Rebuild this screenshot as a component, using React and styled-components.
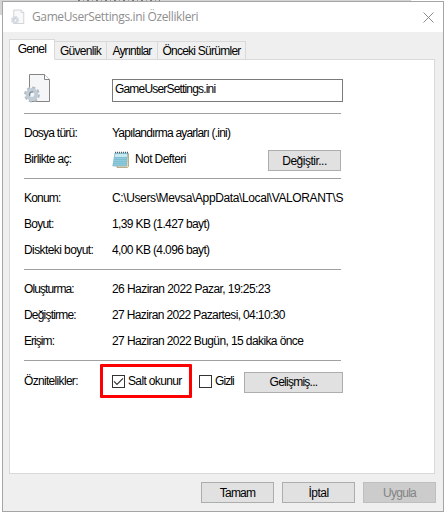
import React from 'react'
import styled, { createGlobalStyle } from 'styled-components'

const GlobalStyle = createGlobalStyle`
    * {
        box-sizing: border-box;
    }
    body {
        margin: 0;
        background: #fff;
        overflow: hidden;
        font-family: "Liberation Sans", Arial, sans-serif;
        font-size: 12px;
        color: #000;
    }
`;

const Desktop = styled.div`
    width: 447px;
    height: 514px;
    padding: 1px 0 0 2px;
    background:
        repeating-linear-gradient(90deg, #777 0 2px, #d4d4d4 2px 5px, #999 5px 6px, #d4d4d4 6px 9px) 78px 0 / 82px 1px no-repeat,
        linear-gradient(#d4d4d4, #d4d4d4) 0 0 / 411px 2px no-repeat,
        linear-gradient(#d4d4d4, #d4d4d4) 0 0 / 2px 15px no-repeat,
        #fff;
`;

const Window = styled.div`
    width: 442px;
    height: 511px;
    display: flex;
    flex-direction: column;
    border: 1px solid #a5a5a5;
    background: #efefef;
`;

const TitleBar = styled.div`
    display: flex;
    align-items: center;
    height: 30px;
    padding: 0 9px 0 8px;
    background: #fff;
`;

const Title = styled.span`
    flex: 1;
    margin-left: 7px;
    font-family: "Open Sans", sans-serif;
    font-size: 12px;
    line-height: 16px;
    letter-spacing: -0.38px;
    color: #8f8f8f;
`;

const Tabs = styled.div`
    display: flex;
    align-items: flex-end;
    height: 28px;
    margin: 0 0 -1px 6px;
    position: relative;
`;

const Tab = styled.div`
    width: ${({ $width }) => $width}px;
    height: ${({ $active }) => ($active ? 21 : 19)}px;
    padding-bottom: ${({ $active }) => ($active ? 2 : 0)}px;
    display: flex;
    align-items: center;
    justify-content: center;
    border: 1px solid #d9d9d9;
    border-left-width: ${({ $active }) => ($active ? 1 : 0)}px;
    border-bottom-color: ${({ $active }) => ($active ? '#fff' : '#d9d9d9')};
    background: ${({ $active }) => ($active ? '#fff' : '#f0f0f0')};
`;

const Text = styled.span`
    line-height: 16px;
    white-space: pre;
    letter-spacing: ${({ $spacing }) => $spacing || 0}px;
`;

const Panel = styled.div`
    width: 426px;
    height: 415px;
    margin-left: 6px;
    padding: 13px 0 0 14px;
    border: 1px solid #d9d9d9;
    background: #fff;
`;

const Row = styled.div`
    display: grid;
    grid-template-columns: 88px 1fr;
    align-items: center;
    width: 319px;
    height: ${({ $height }) => $height || 26}px;
`;

const Header = styled(Row)`
    align-items: start;
    height: 40px;
`;

const Value = styled.div`
    display: flex;
    align-items: center;
    min-width: 0;
`;

const Divider = styled.div`
    width: 317px;
    height: 1px;
    background: #a0a0a0;
`;

const NameField = styled.div`
    width: 231px;
    height: 23px;
    margin-top: 6px;
    padding: 1px 2px;
    border: 1px solid #7a7a7a;
`;

const Group = styled.div`
    padding: ${({ $pad }) => $pad};
`;

const Button = styled.div`
    width: ${({ $width }) => $width || 73}px;
    height: 21px;
    display: flex;
    align-items: center;
    justify-content: center;
    border: 1px solid ${({ $disabled }) => ($disabled ? '#bfbfbf' : '#adadad')};
    background: ${({ $disabled }) => ($disabled ? '#ccc' : '#e1e1e1')};
    color: ${({ $disabled }) => ($disabled ? '#838383' : '#000')};
    margin-left: ${({ $left }) => $left || 0}px;
    margin-top: ${({ $top }) => $top || 0}px;
    flex-shrink: 0;
`;

const AppName = styled.div`
    width: 139px;
    padding-left: 6px;
`;

const Highlight = styled.div`
    width: 92px;
    height: 34px;
    margin-left: -12px;
    padding-left: 9px;
    display: flex;
    align-items: center;
    border: 3px solid #fe0000;
    border-radius: 1px;
    flex-shrink: 0;
`;

const CheckItem = styled.div`
    display: flex;
    align-items: center;
    gap: 3px;
    width: ${({ $width }) => ($width ? `${$width}px` : 'auto')};
    margin-left: ${({ $left }) => $left || 0}px;
`;

const Box = styled.span`
    width: 13px;
    height: 13px;
    display: flex;
    border: 1px solid #333;
    flex-shrink: 0;
`;

const Footer = styled.div`
    display: flex;
    justify-content: flex-end;
    gap: 8px;
    padding: 8px 7px 0 0;
`;

const IniIcon = ({ width, height, faded }) => (
  <svg width={width} height={height} viewBox="0 0 28 31" opacity={faded ? 0.65 : 1}>
    <path d="M5.5 1.5h15l5 5v22h-20z" fill="#f5f6f8" stroke="#858585" />
    <path d="M20.5 1.5v5h5" fill="#fff" stroke="#858585" />
    <circle cx="8" cy="21.5" r="6.7" fill="none" stroke="#b1bbc4" strokeWidth="2.4" strokeDasharray="3.1 2.16" />
    <circle cx="8" cy="21.5" r="4.4" fill="#f4f7f9" stroke="#c2ccd4" strokeWidth="4" />
    <path d="M5.9 22.8a2.6 2.6 0 0 1 3.4-3.6" fill="none" stroke="#7d8a94" strokeWidth="1.4" />
  </svg>
)

const NotepadIcon = () => (
  <svg width="17" height="17" viewBox="0 0 17 17">
    <path d="M3.5 2.5h13v13l-1 1H5z" fill="#e8dcc0" stroke="#a58f68" strokeWidth=".7" />
    <path d="M3 2h12.5L14.5 15H.8z" fill="#8fcbdc" stroke="#76a9b6" strokeWidth=".6" />
    <path d="M3.5 3h11.6L14.8 6H2.8z" fill="#c9e9f1" />
    <path d="M2.7 6.5h12M2.5 8.5h12M2.2 10.5h12M1.8 12.5h12" stroke="#6bb3c8" strokeWidth=".5" />
    <path d="M3 1.5h13" stroke="#4d5c62" strokeWidth="1.4" strokeDasharray="1 1" />
  </svg>
)

const CloseIcon = () => (
  <svg width="11" height="11" viewBox="0 0 11 11">
    <path d="M.5.5l10 10M10.5.5l-10 10" stroke="#8c8c8c" strokeWidth="1" />
  </svg>
)

const CheckMark = () => (
  <svg width="11" height="11" viewBox="0 0 11 11">
    <path d="M1 5.3l3 3L10 2.3" fill="none" stroke="#333" strokeWidth="1.2" />
  </svg>
)

const tabs = [
  { label: 'Genel', width: 46, active: true, spacing: -0.7 },
  { label: 'Güvenlik', width: 52, spacing: -0.7 },
  { label: 'Ayrıntılar', width: 51, spacing: -0.9 },
  { label: 'Önceki Sürümler', width: 88, spacing: -0.75 },
]

const sizes = [
  { label: 'Konum:', value: 'C:\\Users\\Mevsa\\AppData\\Local\\VALORANT\\S', labelSpacing: -0.8, spacing: -0.38 },
  { label: 'Boyut:', value: '1,39 KB (1.427 bayt)', labelSpacing: -0.75, spacing: -0.63 },
  { label: 'Diskteki boyut:', value: '4,00 KB (4.096 bayt)', labelSpacing: -0.58, spacing: -0.63 },
]

const dates = [
  { label: 'Oluşturma:', value: '26 Haziran 2022 Pazar, 19:25:23', labelSpacing: -0.9, spacing: -0.56 },
  { label: 'Değiştirme:', value: '27 Haziran 2022 Pazartesi, 04:10:30', labelSpacing: -0.8, spacing: -0.63 },
  { label: 'Erişim:', value: '27 Haziran 2022 Bugün, 15 dakika önce', labelSpacing: -0.95, spacing: -0.6 },
]

const InfoRow = ({ label, value, spacing, labelSpacing }) => (
  <Row>
    <Text $spacing={labelSpacing}>{label}</Text>
    <Value>
      <Text $spacing={spacing}>{value}</Text>
    </Value>
  </Row>
)

const App = () => {
  return (
    <Desktop>
      <GlobalStyle />
      <Window>
        <TitleBar>
          <IniIcon width={14} height={16} faded />
          <Title>GameUserSettings.ini Özellikleri</Title>
          <CloseIcon />
        </TitleBar>
        <Tabs>
          {tabs.map((tab) => (
            <Tab key={tab.label} $width={tab.width} $active={tab.active}>
              <Text $spacing={tab.spacing}>{tab.label}</Text>
            </Tab>
          ))}
        </Tabs>
        <Panel>
          <Header>
            <IniIcon width={28} height={31} />
            <NameField>
              <Text $spacing={-0.82}>GameUserSettings.ini</Text>
            </NameField>
          </Header>
          <Divider />
          <Group $pad="6px 0 6px">
            <Row>
              <Text $spacing={-0.75}>Dosya türü:</Text>
              <Text $spacing={-0.8}>Yapılandırma ayarları (.ini)</Text>
            </Row>
            <Row>
              <Text $spacing={-0.65}>Birlikte aç:</Text>
              <Value>
                <NotepadIcon />
                <AppName>
                  <Text $spacing={-0.6}>Not Defteri</Text>
                </AppName>
                <Button $top={3}>
                  <Text $spacing={-0.5}>Değiştir...</Text>
                </Button>
              </Value>
            </Row>
          </Group>
          <Divider />
          <Group $pad="6px 0">
            {sizes.map((row) => (
              <InfoRow key={row.label} {...row} />
            ))}
          </Group>
          <Divider />
          <Group $pad="6px 0">
            {dates.map((row) => (
              <InfoRow key={row.label} {...row} />
            ))}
          </Group>
          <Divider />
          <Row $height={40}>
            <Text $spacing={-0.68}>Öznitelikler:</Text>
            <Value>
              <Highlight>
                <CheckItem>
                  <Box>
                    <CheckMark />
                  </Box>
                  <Text $spacing={-0.65}>Salt okunur</Text>
                </CheckItem>
              </Highlight>
              <CheckItem $left={7} $width={37}>
                <Box />
                <Text $spacing={-0.9}>Gizli</Text>
              </CheckItem>
              <Button $width={99} $left={8} $top={2}>
                <Text $spacing={-0.75}>Gelişmiş...</Text>
              </Button>
            </Value>
          </Row>
        </Panel>
        <Footer>
          <Button>
            <Text $spacing={-0.8}>Tamam</Text>
          </Button>
          <Button>
            <Text $spacing={-0.5}>İptal</Text>
          </Button>
          <Button $disabled>
            <Text $spacing={-0.7}>Uygula</Text>
          </Button>
        </Footer>
      </Window>
    </Desktop>
  )
}

export default App
